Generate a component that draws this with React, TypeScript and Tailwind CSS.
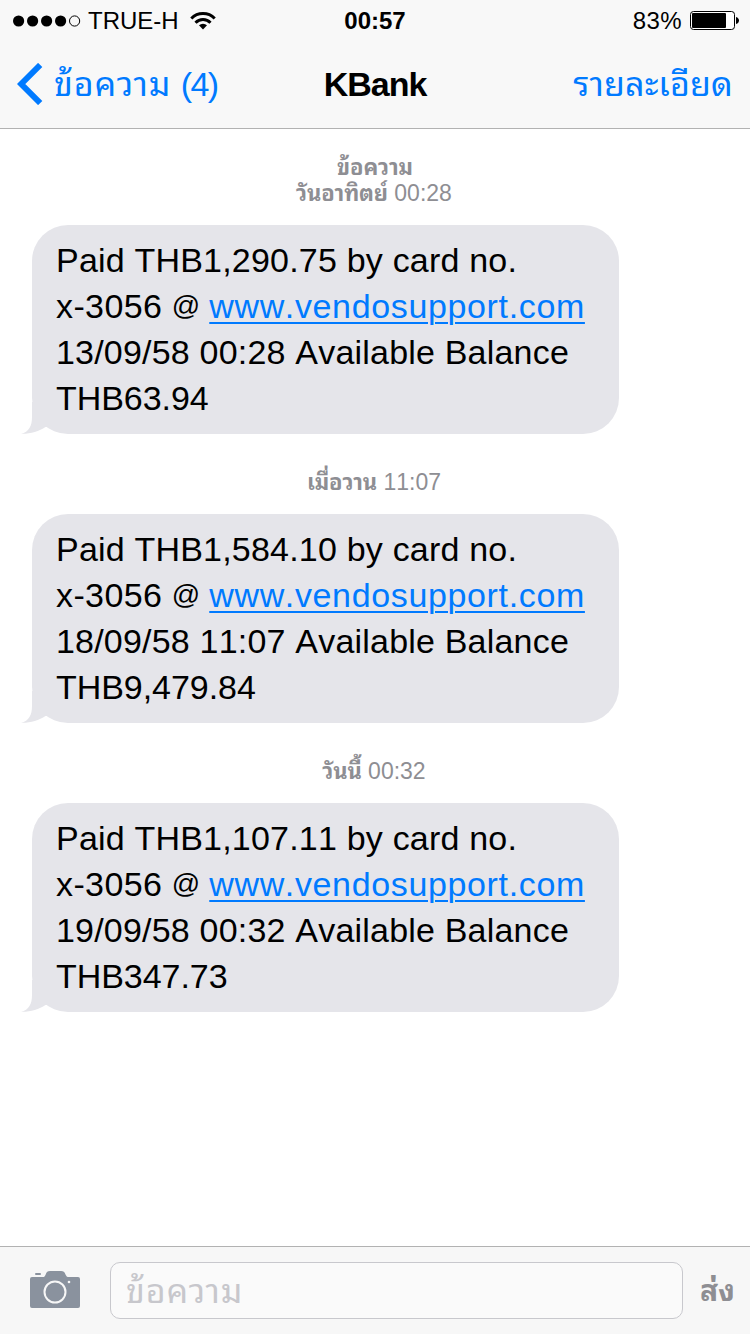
import type { ReactNode } from 'react'

interface Message {
  day: string
  time: string
  label?: string // extra line above the date
  lines: [ReactNode, ReactNode, ReactNode, ReactNode]
}

const Site = () => (
  <>
    <span className="tracking-[0.4px]">x-3056</span>{' '}
    <span className="inline-block w-[28px] align-[3px] text-[28px] leading-none">@</span>{' '}
    <a
      href="#"
      className="tracking-[0.64px] text-[#007aff] underline decoration-2 underline-offset-[4px]"
    >
      www.vendosupport.com
    </a>
  </>
)

const messages: Message[] = [
  {
    label: 'ข้อความ',
    day: 'วันอาทิตย์',
    time: '00:28',
    lines: ['Paid THB1,290.75 by card no.', <Site />, '13/09/58 00:28 Available Balance', 'THB63.94'],
  },
  {
    day: 'เมื่อวาน',
    time: '11:07',
    lines: ['Paid THB1,584.10 by card no.', <Site />, '18/09/58 11:07 Available Balance', 'THB9,479.84'],
  },
  {
    day: 'วันนี้',
    time: '00:32',
    lines: ['Paid THB1,107.11 by card no.', <Site />, '19/09/58 00:32 Available Balance', 'THB347.73'],
  },
]

const lineTracking = ['tracking-[0.2px]', '', 'tracking-[0.2px]', 'tracking-[-0.05px]']

const StatusBar = () => (
  <div className="grid h-10 grid-cols-3 items-center pt-[2px] text-[24px] leading-[38px] text-black">
    <div className="flex items-center pl-[13px]">
      <svg width="68" height="12" viewBox="0 0 68 12">
        <circle cx="5.6" cy="6" r="5.6" />
        <circle cx="19.6" cy="6" r="5.6" />
        <circle cx="33.6" cy="6" r="5.6" />
        <circle cx="47.6" cy="6" r="5.6" />
        <circle cx="61.6" cy="6" r="5.1" fill="none" stroke="black" />
      </svg>
      <span className="ml-[7px] w-[91px] whitespace-nowrap">TRUE-H</span>
      <svg className="ml-[11px]" width="26" height="20" viewBox="0 0 26 20" fill="none" stroke="black" strokeWidth="3">
        <path d="M1.3 7.500a16.300 16.300 0 0 1 23.400 0" />
        <path d="M5.500 11.700a10.500 10.500 0 0 1 15 0" />
        <path d="M13 18.500l-4-4.300a6 6 0 0 1 8 0z" fill="black" stroke="none" />
      </svg>
    </div>
    <span className="text-center font-bold">00:57</span>
    <div className="flex items-center justify-end pr-[11px]">
      <span className="mr-2 tracking-[0.4px]">83%</span>
      <svg width="49" height="20" viewBox="0 0 49 20">
        <rect x="0.5" y="0.5" width="44" height="18" rx="3" fill="white" stroke="black" />
        <rect x="2" y="2" width="34" height="15" rx="1" />
        <path d="M46 6c4 1 4 6 0 7z" />
      </svg>
    </div>
  </div>
)

const NavBar = () => (
  <nav className="flex h-[88px] items-center justify-between pr-[17px] pl-[17px] text-[#007aff]">
    <div className="flex w-[230px] items-center">
      <svg width="26" height="42" viewBox="0 0 26 42" fill="none" stroke="#007aff" strokeWidth="6">
        <path d="M23.200 2L4.200 21l19 19" />
      </svg>
      <span className="ml-[11px] text-[34px] whitespace-nowrap">
        <span className="tracking-[0.9px]">ข้อความ</span> <span className="tracking-[-1.6px]">(4)</span>
      </span>
    </div>
    <h1 className="text-[34px] font-bold tracking-[-1px] text-black">KBank</h1>
    <span className="w-[230px] text-right text-[34px] tracking-[0.2px] whitespace-nowrap">รายละเอียด</span>
  </nav>
)

const Bubble = ({ lines }: { lines: Message['lines'] }) => (
  <div className="relative ml-8 h-[209px] w-[587px] rounded-[36px] bg-[#e5e5ea] pt-3 pl-6 text-[34px] leading-[46px] text-black [font-kerning:none]">
    {/* tail */}
    <svg className="absolute bottom-0 -left-[11px]" width="44" height="32" viewBox="0 0 44 32" fill="#e5e5ea">
      <path d="M11 0v15c0 9-3 15-11 16.800 9 .3 18-2.500 24.500-6.800L44 25V0z" />
    </svg>
    {lines.map((line, i) => (
      <p key={i} className={`relative h-[46px] whitespace-nowrap ${lineTracking[i]}`}>{line}</p>
    ))}
  </div>
)

const Composer = () => (
  <footer className="flex h-[88px] items-center border-t border-[#b2b2b2] bg-[#f7f7f7]">
    <svg className="mb-1 ml-[30px] shrink-0" width="50" height="38" viewBox="0 0 50 38" fill="#8a929e">
      <path d="M2 7h10.500c2 0 2.500-1 3.200-2.600C16.700 2 17.500 1 20 1h11c2.500 0 3.500 1 4.500 3.400C36.200 6 37 7 39 7h9a2 2 0 0 1 2 2v27a2 2 0 0 1-2 2H2a2 2 0 0 1-2-2V9a2 2 0 0 1 2-2z" />
      <rect x="5" y="3" width="6" height="2" rx="1" />
      <circle cx="25" cy="22" r="10.500" fill="none" stroke="#f7f7f7" strokeWidth="2" />
      <circle cx="39" cy="12" r="1.300" fill="#f7f7f7" />
    </svg>
    <div className="ml-[30px] flex h-[57px] w-[573px] items-center rounded-[10px] border border-[#c8c8cd] bg-[#fafafa] pt-[2px] pl-[15px] text-[34px] tracking-[0.9px] text-[#c7c7cc]">
      ข้อความ
    </div>
    <span className="ml-[17px] text-[30px] font-bold text-[#8e8e93]">ส่ง</span>
  </footer>
)

const App = () => {
  return (
    <div className="flex h-[1334px] w-[750px] flex-col overflow-hidden bg-white font-['Liberation_Sans','Noto_Sans_Thai_Looped','Loma','Noto_Sans_Thai',sans-serif]">
      <header className="h-[129px] border-b border-[#b2b2b2] bg-[#f8f8f8]">
        <StatusBar />
        <NavBar />
      </header>
      <main className="flex-1">
        {messages.map((message) => (
          <section key={message.time}>
            <div
              className={`flex flex-col justify-end pb-[18px] text-center text-[23px] leading-[26px] text-[#8e8e93] ${
                message.label ? 'h-[96px]' : 'h-[80px]'
              }`}
            >
              {message.label && <p className="-mb-px h-[26px] text-[22px] font-bold">{message.label}</p>}
              <p className="pr-[2px] [font-kerning:none]">
                <span className="text-[22px] font-bold tracking-[-0.15px]">{message.day}</span> {message.time}
              </p>
            </div>
            <Bubble lines={message.lines} />
          </section>
        ))}
      </main>
      <Composer />
    </div>
  )
}

export default App
